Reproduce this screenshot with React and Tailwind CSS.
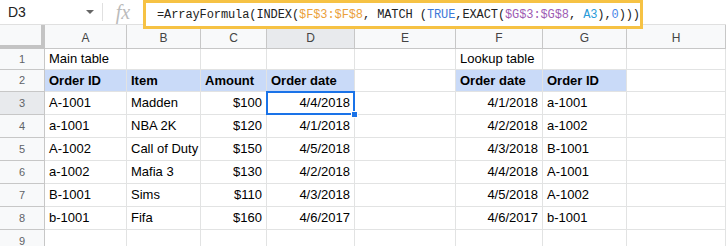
import React from 'react';

const cols = 'grid grid-cols-[45px_82px_74px_66px_88px_101px_87px_84px_1fr]';

const letters = ['A', 'B', 'C', 'D', 'E', 'F', 'G', 'H'];

const rows = [
  ['A-1001', 'Madden', '$100', '4/4/2018', '4/1/2018', 'a-1001'],
  ['a-1001', 'NBA 2K', '$120', '4/1/2018', '4/2/2018', 'a-1002'],
  ['A-1002', 'Call of Duty', '$150', '4/5/2018', '4/3/2018', 'B-1001'],
  ['a-1002', 'Mafia 3', '$130', '4/2/2018', '4/4/2018', 'A-1001'],
  ['B-1001', 'Sims', '$110', '4/3/2018', '4/5/2018', 'A-1002'],
  ['b-1001', 'Fifa', '$160', '4/6/2017', '4/6/2017', 'b-1001'],
];

function Cell({ children, right, head, bold, selected }) {
  return (
    <div
      className={`relative flex items-center border-r border-b border-[#e2e3e3] px-[4px] whitespace-nowrap ${
        right ? 'justify-end' : ''
      } ${head ? 'bg-[#c9daf8]' : ''} ${bold ? 'font-bold' : ''} ${selected ? 'z-10' : 'overflow-hidden'}`}
    >
      {children}
      {selected && (
        <div className="absolute inset-[-1px] border-2 border-[#1a73e8]">
          <div className="absolute right-[-5px] bottom-[-5px] w-[7px] h-[7px] bg-[#1a73e8] border border-white" />
        </div>
      )}
    </div>
  );
}

function RowHead({ n, active }) {
  return (
    <div
      className={`flex items-center justify-center border-r border-b border-[#c7c7c7] text-[11px] text-[#5f6368] ${
        active ? 'bg-[#e8eaed]' : 'bg-[#f8f9fa]'
      }`}
    >
      {n}
    </div>
  );
}

export default function App() {
  return (
    <div
      className="w-[726px] h-[246px] overflow-hidden bg-white text-[13px] text-black"
      style={{ fontFamily: '"Liberation Sans", Arial, sans-serif' }}
    >
      {/* formula bar */}
      <div className="flex h-[25px] border-b border-[#e0e0e0] bg-white">
        <div className="flex items-center w-[103px] pl-[8px] pr-[8px] border-r border-[#e0e0e0] my-[3px]">
          <span className="text-[14px] text-[#222]">D3</span>
          <span className="ml-auto w-0 h-0 border-l-[4px] border-r-[4px] border-t-[4px] border-l-transparent border-r-transparent border-t-[#666]" />
        </div>
        <div className="flex items-center justify-center w-[40px] text-[#bbb] text-[20px] italic" style={{ fontFamily: '"Liberation Serif", serif' }}>
          fx
        </div>
        <div
          className="relative z-20 flex items-center w-[500px] h-[29px] border-[3px] border-[#f6c244] bg-white pl-[11px] text-[12px] text-[#222] whitespace-pre"
          style={{ fontFamily: '"Liberation Mono", monospace' }}
        >
          <span className="tracking-[-0.1px]">
            =ArrayFormula(INDEX(<span className="text-[#eba13a]">$F$3:$F$8</span>, MATCH (
            <span className="text-[#3c78d8]">TRUE</span>,EXACT(
            <span className="text-[#9e5bb3]">$G$3:$G$8</span>
            {', '}
            <span className="text-[#2a9bd8]">A3</span>),<span className="text-[#4a86e8]">0</span>)))
          </span>
        </div>
      </div>

      {/* column headers */}
      <div className={`${cols} h-[24px]`}>
        <div className="bg-[#f8f9fa] border-r-4 border-b-4 border-[#c4c4c4]" />
        {letters.map((l) => (
          <div
            key={l}
            className={`flex items-center justify-center border-r border-b border-[#c7c7c7] text-[12px] text-[#444] pt-[2px] ${
              l === 'D' ? 'bg-[#e8eaed]' : 'bg-[#f8f9fa]'
            }`}
          >
            {l}
          </div>
        ))}
      </div>

      {/* row 1 */}
      <div className={`${cols} h-[21px]`}>
        <RowHead n={1} />
        <Cell>Main table</Cell>
        <Cell />
        <Cell />
        <Cell />
        <Cell />
        <Cell>Lookup table</Cell>
        <Cell />
        <Cell />
      </div>

      {/* row 2 */}
      <div className={`${cols} h-[22px]`}>
        <RowHead n={2} />
        <Cell head bold>Order ID</Cell>
        <Cell head bold>Item</Cell>
        <Cell head bold>Amount</Cell>
        <Cell head bold>Order date</Cell>
        <Cell />
        <Cell head bold>Order date</Cell>
        <Cell head bold>Order ID</Cell>
        <Cell />
      </div>

      {rows.map((r, i) => (
        <div key={i} className={`${cols} h-[23px]`}>
          <RowHead n={i + 3} active={i === 0} />
          <Cell>{r[0]}</Cell>
          <Cell>{r[1]}</Cell>
          <Cell right>{r[2]}</Cell>
          <Cell right selected={i === 0}>{r[3]}</Cell>
          <Cell />
          <Cell right>{r[4]}</Cell>
          <Cell>{r[5]}</Cell>
          <Cell />
        </div>
      ))}

      <div className={`${cols} h-[23px]`}>
        <RowHead n={9} />
        <Cell />
        <Cell />
        <Cell />
        <Cell />
        <Cell />
        <Cell />
        <Cell />
        <Cell />
      </div>
    </div>
  );
}
